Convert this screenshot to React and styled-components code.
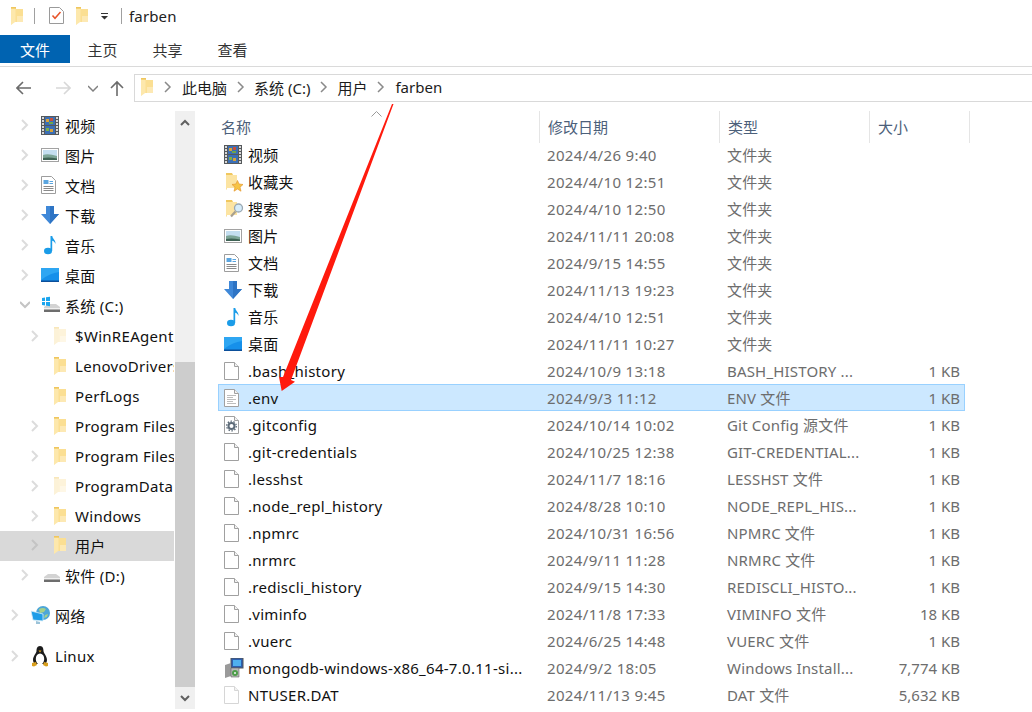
import React from "react";
import styled, { createGlobalStyle } from "styled-components";

const FONT = `"Noto Sans", "Noto Sans CJK SC", sans-serif`;

const Global = createGlobalStyle`
  html, body { margin: 0; padding: 0; background: #fff; overflow: hidden; }
  * { box-sizing: border-box; }
  body { font-family: ${FONT}; font-size: 15px; color: #111; }
`;

const Page = styled.div`
  position: relative;
  width: 1032px;
  height: 712px;
  overflow: hidden;
  background: #fff;
`;

const TitleBar = styled.div`
  height: 35px;
  display: flex;
  align-items: center;
  padding-left: 10px;
  padding-bottom: 4px;
`;
const TitleSep = styled.span`
  width: 1px;
  height: 16px;
  background: #a0a0a0;
  margin: 0 ${p => p.$right}px 0 ${p => p.$left}px;
`;
const TitleText = styled.span`
  font-size: 15px;
  color: #222;
  letter-spacing: 0.15px;
`;
const TitleIconGap = styled.span`
  display: inline-flex;
  margin-right: ${p => p.$m}px;
`;

const Ribbon = styled.div`
  height: 32px;
  display: flex;
  align-items: flex-start;
  border-bottom: 1px solid #dadada;
`;
const FileTab = styled.div`
  width: 70px;
  height: 28px;
  background: #0063b1;
  color: #fff;
  font-size: 15px;
  display: flex;
  align-items: center;
  justify-content: center;
`;
const RibbonTab = styled.div`
  width: 65px;
  height: 28px;
  font-size: 15px;
  color: #333;
  display: flex;
  align-items: center;
  justify-content: center;
`;

const NavRow = styled.div`
  height: 35px;
  display: flex;
  align-items: flex-end;
`;
const NavButtons = styled.div`
  width: 134px;
  height: 27px;
  display: flex;
  align-items: center;
`;
const NavSlot = styled.span`
  width: ${p => p.$w}px;
  flex: none;
  display: flex;
  justify-content: center;
`;
const AddressBox = styled.div`
  flex: 1;
  height: 28px;
  border: 1px solid #d9d9d9;
  border-right: 0;
  display: flex;
  align-items: center;
  padding: 0 0 2px 5px;
  font-size: 15px;
  color: #1c1c1c;
`;
const Crumb = styled.span`
  white-space: nowrap;
`;
const CrumbArrow = styled.span`
  display: inline-flex;
  width: ${p => p.$w}px;
  justify-content: center;
`;

const Body = styled.div`
  height: 610px;
  display: flex;
`;

const Sidebar = styled.aside`
  width: 174px;
  padding-top: 9px;
  flex: none;
  overflow: hidden;
`;
const TreeRow = styled.div`
  height: 30px;
  display: flex;
  align-items: center;
  white-space: nowrap;
  overflow: hidden;
  padding-left: ${p => p.$level * 10 + 20}px;
  padding-bottom: ${p => (p.$latin ? 0 : 2)}px;
  margin-top: ${p => p.$gap || 0}px;
  background: ${p => (p.$selected ? "#d9d9d9" : "transparent")};
  font-size: 15px;
  letter-spacing: 0.3px;
  color: #111;
`;
const Twisty = styled.span`
  width: 21px;
  flex: none;
  display: flex;
`;
const TreeIcon = styled.span`
  width: 24px;
  flex: none;
  display: flex;
  padding-left: ${p => (p.$inset ? 2 : 0)}px;
`;

const Scrollbar = styled.div`
  width: 20px;
  margin: 9px 0 3px 1px;
  background: #f0f0f0;
  display: flex;
  flex-direction: column;
  flex: none;
`;
const ScrollBtn = styled.div`
  height: 22px;
  flex: none;
  display: flex;
  align-items: center;
  justify-content: center;
`;
const ScrollTrack = styled.div`
  flex: 1;
  padding-top: 229px;
  display: flex;
`;
const ScrollThumb = styled.div`
  flex: 1;
  background: #cdcdcd;
`;

const Main = styled.main`
  flex: 1;
  padding: 9px 0 0 23px;
  position: relative;
`;
const HeaderRow = styled.div`
  display: grid;
  grid-template-columns: 322px 180px 150px 100px;
  height: 30px;
  color: #4c607a;
  font-size: 15px;
`;
const HeaderCell = styled.div`
  height: 32px;
  padding: 5px 0 0 ${p => (p.$first ? 3 : 8)}px;
  border-right: 1px solid #e5e5e5;
  position: relative;
`;
const SortCaret = styled.span`
  position: absolute;
  left: 153px;
  top: 0;
  display: flex;
`;
const FileRow = styled.div`
  display: grid;
  height: 27px;
  align-items: center;
  width: 747px;
  grid-template-columns: 321px 180px 150px 94px;
  border: 1px solid ${p => (p.$selected ? "#99d1ff" : "transparent")};
  background: ${p => (p.$selected ? "#cce8ff" : "transparent")};
`;
const NameCell = styled.div`
  display: flex;
  align-items: center;
  padding-left: 4px;
  color: #111;
  white-space: nowrap;
  overflow: hidden;
  letter-spacing: 0.28px;
`;
const FileIcon = styled.span`
  width: 25px;
  flex: none;
  display: flex;
  padding-left: 1px;
`;
const DateCell = styled.div`
  padding-left: 7px;
  color: #6d6d6d;
  white-space: nowrap;
  letter-spacing: 0.35px;
`;
const TypeCell = styled.div`
  padding-left: 7px;
  color: #6d6d6d;
  white-space: nowrap;
  letter-spacing: 0.18px;
`;
const Size = styled.div`
  text-align: right;
  padding-right: 4px;
  color: #6d6d6d;
  white-space: nowrap;
`;
const ArrowOverlay = styled.svg`
  position: absolute;
  left: 0;
  top: 0;
  pointer-events: none;
`;

/* ---------- icons ---------- */
const Folder = ({ pale }) => (
  <svg width="13" height="18" viewBox="0 0 13 18">
    <path d="M1 0h5v2h7v13H2L1 18z" fill={pale ? "#fbeecb" : "#f6d474"} />
    <path d="M5 2h8v13H5z" fill={pale ? "#fdf3da" : "#fbdf93"} />
    <path d="M7 9h6v6H7z" fill={pale ? "#fef7e6" : "#fde9b4"} />
    <path d="M1 1.500h4.500v13.300L1 18z" fill={pale ? "#fcf2d8" : "#fde8ac"} />
    <path d="M1 0h5v1.500H1z" fill={pale ? "#f8e7bb" : "#efc65f"} />
  </svg>
);
const BigFolder = ({ children }) => (
  <svg width="20" height="20" viewBox="0 0 20 20">
    <path d="M2 1h6l1 2v13H3l-1 2z" fill="#f0c75e" />
    <path d="M2 3h11v13H3l-1 2z" fill="#fce4a2" />
    {children}
  </svg>
);
const Star = () => (
  <BigFolder>
    <path d="M13.500 8.500l1.500 3.500 4 .5-3 2.700 1 4-3.500-2.200-3.500 2.200 1-4-3-2.700 4-.5z" fill="#f6c445" stroke="#e59a30" strokeWidth=".7" />
  </BigFolder>
);
const SearchF = () => (
  <BigFolder>
    <circle cx="14.500" cy="9" r="4" fill="#d5ecfa" stroke="#9aa8b2" strokeWidth="1.300" />
    <path d="M11.500 12.500l-4.500 5" stroke="#a8a090" strokeWidth="2.200" />
  </BigFolder>
);
const Video = () => (
  <svg width="18" height="19" viewBox="0 0 18 19">
    <rect x="0" y="0" width="18" height="19" fill="#55595c" />
    <rect x="4" y="1" width="10" height="8" fill="#3c6fb5" />
    <rect x="4" y="10" width="10" height="8" fill="#3c6fb5" />
    <rect x="5" y="3" width="3" height="3" fill="#d9a23a" />
    <rect x="9" y="2" width="3" height="3" fill="#c8503a" />
    <rect x="8" y="6" width="4" height="2" fill="#6ea84a" />
    <rect x="5" y="12" width="3" height="3" fill="#7cae4a" />
    <rect x="9" y="13" width="3" height="3" fill="#d9a23a" />
    {[1, 4, 7, 10, 13, 16].map(y => (
      <g key={y}>
        <rect x="1" y={y} width="2" height="2" fill="#d8d8d8" />
        <rect x="15" y={y} width="2" height="2" fill="#d8d8d8" />
      </g>
    ))}
  </svg>
);
const Picture = () => (
  <svg width="18" height="14" viewBox="0 0 18 14">
    <rect x=".5" y=".5" width="17" height="13" fill="#fff" stroke="#a2a2a2" />
    <rect x="2" y="2" width="14" height="6" fill="#c4def0" />
    <path d="M2 7q5-2 14 1v4H2z" fill="#7da597" />
    <path d="M2 10q6-1 14 .5V12H2z" fill="#3f6355" />
  </svg>
);
const Doc = () => (
  <svg width="15" height="18" viewBox="0 0 15 18">
    <path d="M.5.5h10l4 4v13H.5z" fill="#fff" stroke="#9d9d9d" />
    <rect x="2.500" y="4" width="5" height="4" fill="#5aa5e0" />
    {[5, 7].map(y => <rect key={y} x="8.500" y={y} width="3.500" height="1" fill="#5aa5e0" />)}
    {[10, 12, 14].map(y => <rect key={y} x="2.500" y={y} width="10" height="1" fill="#8a8a8a" />)}
  </svg>
);
const Download = () => (
  <svg width="18" height="18" viewBox="0 0 18 18">
    <path d="M5 0h8v8h5l-9 10L0 8h5z" fill="#3f88d8" />
    <path d="M9 0h4v8h5l-9 10z" fill="#2e74c4" />
  </svg>
);
const Music = () => (
  <svg width="18" height="20" viewBox="0 0 18 20">
    <ellipse cx="7" cy="16" rx="4" ry="3.200" fill="#1a9ce8" />
    <path d="M9.500 1h1.800c.2 3 3.700 4 3.200 8-.6-2-2-3-3.300-3.300V16H9.500z" fill="#1a9ce8" />
  </svg>
);
const Desktop = () => (
  <svg width="18" height="14" viewBox="0 0 18 14">
    <rect width="18" height="13" fill="#1690ea" />
    <path d="M0 0h18v4q-9 1-18 8z" fill="#2ea6f2" />
    <rect y="12.500" width="18" height="1.500" fill="#0b4f9a" />
  </svg>
);
const Drive = ({ win }) => (
  <svg width="20" height="18" viewBox="0 0 20 18">
    <path d="M3 11l4-3h8l4 3v3H3z" fill="#d3d3d3" />
    <path d="M3 13h16v3H3z" fill="#6d6d6d" />
    <path d="M3 12h16v1.500H3z" fill="#f0f0f0" />
    {win && (
      <g fill="#1ba5ee">
        <path d="M1 2l3-.5V5H1zM5 1.300L9 .8V5H5zM1 6h3v3.500L1 9zM5 6h4v4.200l-4-.6z" />
      </g>
    )}
  </svg>
);
const Globe = () => (
  <svg width="20" height="19" viewBox="0 0 20 19">
    <circle cx="12" cy="7" r="7" fill="#4da6d8" />
    <path d="M8 3q4-2 7 0l-2 3-4 1zM14 9l3-1-1 3-3 1z" fill="#a5d08a" />
    <path d="M0 5l12 3v7L2 14z" fill="#1e9de8" stroke="#d8eef8" strokeWidth=".8" />
    <path d="M5 15l4 1v2H5z" fill="#9cc3d8" />
  </svg>
);
const Tux = () => (
  <svg width="18" height="21" viewBox="0 0 18 21">
    <path d="M9 0c3 0 3.500 3 3.500 5 0 2 3.500 5 3.500 9 0 2-1 3-2 4H4c-1-1-2-2-2-4 0-4 3.500-7 3.500-9C5.500 3 6 0 9 0z" fill="#1c1c1c" />
    <ellipse cx="9" cy="13" rx="4.200" ry="5.500" fill="#fff" />
    <path d="M7.500 4.500h3L9 6.500z" fill="#e3a51e" />
    <path d="M1 17l4-1 1 3-3 1.500-2-.5zM17 17l-4-1-1 3 3 1.500 2-.5z" fill="#d99f1d" />
  </svg>
);
const Blank = ({ lines, gear, pale }) => (
  <svg width="15" height="18" viewBox="0 0 15 18">
    <path d="M.5.5h10l4 4v13H.5z" fill="#fff" stroke={pale ? "#d6d6d6" : "#a0a0a0"} />
    <path d="M10.500.5v4h4" fill="#f2f2f2" stroke={pale ? "#d6d6d6" : "#a0a0a0"} />
    {lines && [6, 8, 10, 12, 14].map((y, i) => (
      <rect key={y} x="3" y={y} width={i % 2 ? 6 : 9} height="1" fill="#bdbdbd" />
    ))}
    {gear && (
      <g>
        <circle cx="7.500" cy="10" r="3" fill="none" stroke="#5d6b78" strokeWidth="2" />
        <circle cx="7.500" cy="10" r="4.800" fill="none" stroke="#5d6b78" strokeWidth="1.300" strokeDasharray="1.500 1.500" />
      </g>
    )}
  </svg>
);
const Installer = () => (
  <svg width="20" height="20" viewBox="0 0 20 20">
    <rect x="7" y="0" width="12" height="10" fill="#2d5fb0" stroke="#555" />
    <rect x="9" y="2" width="8" height="6" fill="#4fb0ee" />
    <path d="M1 7l6-2v13l-6 2z" fill="#9a9a9a" />
    <path d="M7 10h8v9H7z" fill="#b8b8b8" stroke="#666" strokeWidth=".6" />
    <circle cx="11" cy="15" r="3" fill="#4d9e4a" />
    <circle cx="11" cy="15" r="1" fill="#f0f0f0" />
  </svg>
);
const CheckPage = () => (
  <svg width="15" height="17" viewBox="0 0 15 17">
    <path d="M.5.5h10l4 4v12H.5z" fill="#fff" stroke="#9a9a9a" />
    <path d="M3.500 8.500l2.500 2.800L11.500 5" fill="none" stroke="#e8542a" strokeWidth="1.500" />
  </svg>
);
const Chevron = ({ c = "#dcdcdc", w = 2, down }) => (
  <svg width="10" height="12" viewBox="0 0 10 12">
    <path d={down ? "M0 3l5 5 5-5" : "M2 1l5 5-5 5"} fill="none" stroke={c} strokeWidth={w} />
  </svg>
);
const NavArrow = ({ c, dir }) => {
  const paths = {
    left: "M15 8H1M7 2L1 8l6 6",
    right: "M1 8h14M9 2l6 6-6 6",
    up: "M8 16V2M2 8l6-6 6 6",
  };
  return (
    <svg width="16" height="17" viewBox="0 0 16 17">
      <path d={paths[dir]} fill="none" stroke={c} strokeWidth="1.600" />
    </svg>
  );
};

/* ---------- data ---------- */
const tree = [
  { level: 0, icon: <Video />, label: "视频", tw: "r" },
  { level: 0, icon: <Picture />, label: "图片", tw: "r" },
  { level: 0, icon: <Doc />, label: "文档", tw: "r" },
  { level: 0, icon: <Download />, label: "下载", tw: "r" },
  { level: 0, icon: <Music />, label: "音乐", tw: "r" },
  { level: 0, icon: <Desktop />, label: "桌面", tw: "r" },
  { level: 0, icon: <Drive win />, label: "系统 (C:)", tw: "d" },
  { level: 1, icon: <Folder pale />, label: "$WinREAgent", tw: "r", latin: true },
  { level: 1, icon: <Folder />, label: "LenovoDrivers", latin: true },
  { level: 1, icon: <Folder />, label: "PerfLogs", latin: true },
  { level: 1, icon: <Folder />, label: "Program Files", tw: "r", latin: true },
  { level: 1, icon: <Folder />, label: "Program Files (x86)", tw: "r", latin: true },
  { level: 1, icon: <Folder pale />, label: "ProgramData", tw: "r", latin: true },
  { level: 1, icon: <Folder />, label: "Windows", tw: "r", latin: true },
  { level: 1, icon: <Folder />, label: "用户", tw: "r", selected: true },
  { level: 0, icon: <Drive />, label: "软件 (D:)", tw: "r" },
  { level: -1, icon: <Globe />, label: "网络", tw: "r", gap: 10 },
  { level: -1, icon: <Tux />, label: "Linux", tw: "r", gap: 10, latin: true },
];

const folder = "文件夹";
const files = [
  [<Video />, "视频", "2024/4/26 9:40", folder, ""],
  [<Star />, "收藏夹", "2024/4/10 12:51", folder, ""],
  [<SearchF />, "搜索", "2024/4/10 12:50", folder, ""],
  [<Picture />, "图片", "2024/11/11 20:08", folder, ""],
  [<Doc />, "文档", "2024/9/15 14:55", folder, ""],
  [<Download />, "下载", "2024/11/13 19:23", folder, ""],
  [<Music />, "音乐", "2024/4/10 12:51", folder, ""],
  [<Desktop />, "桌面", "2024/11/11 10:27", folder, ""],
  [<Blank />, ".bash_history", "2024/10/9 13:18", "BASH_HISTORY ...", "1 KB"],
  [<Blank lines />, ".env", "2024/9/3 11:12", "ENV 文件", "1 KB", true],
  [<Blank gear />, ".gitconfig", "2024/10/14 10:02", "Git Config 源文件", "1 KB"],
  [<Blank />, ".git-credentials", "2024/10/25 12:38", "GIT-CREDENTIAL...", "1 KB"],
  [<Blank />, ".lesshst", "2024/11/7 18:16", "LESSHST 文件", "1 KB"],
  [<Blank />, ".node_repl_history", "2024/8/28 10:10", "NODE_REPL_HIS...", "1 KB"],
  [<Blank />, ".npmrc", "2024/10/31 16:56", "NPMRC 文件", "1 KB"],
  [<Blank />, ".nrmrc", "2024/9/11 11:28", "NRMRC 文件", "1 KB"],
  [<Blank />, ".rediscli_history", "2024/9/15 14:30", "REDISCLI_HISTO...", "1 KB"],
  [<Blank />, ".viminfo", "2024/11/8 17:33", "VIMINFO 文件", "18 KB"],
  [<Blank />, ".vuerc", "2024/6/25 14:48", "VUERC 文件", "1 KB"],
  [<Installer />, "mongodb-windows-x86_64-7.0.11-si...", "2024/9/2 18:05", "Windows Install...", "7,774 KB"],
  [<Blank pale />, "NTUSER.DAT", "2024/11/13 9:45", "DAT 文件", "5,632 KB"],
];

const crumbs = [
  ["此电脑", 29],
  ["系统 (C:)", 27],
  ["用户", 27],
  ["farben", 28],
];

export default function App() {
  return (
    <Page>
      <Global />
      <TitleBar>
        <Folder />
        <TitleSep $left={11} $right={14} />
        <TitleIconGap $m={11}><CheckPage /></TitleIconGap>
        <TitleIconGap $m={12}><Folder /></TitleIconGap>
        <svg width="9" height="8" viewBox="0 0 9 8"><path d="M1 1h7v1H1zM1 4h7L4.500 7.500z" fill="#333" /></svg>
        <TitleSep $left={12} $right={7} />
        <TitleText>farben</TitleText>
      </TitleBar>
      <Ribbon>
        <FileTab>文件</FileTab>
        <RibbonTab>主页</RibbonTab>
        <RibbonTab>共享</RibbonTab>
        <RibbonTab>查看</RibbonTab>
      </Ribbon>
      <NavRow>
        <NavButtons>
          <NavSlot $w={8} />
          <NavSlot $w={32}><NavArrow c="#6b6b6b" dir="left" /></NavSlot>
          <NavSlot $w={45}><NavArrow c="#d8d8d8" dir="right" /></NavSlot>
          <NavSlot $w={15}><Chevron c="#808080" w={1.500} down /></NavSlot>
          <NavSlot $w={34}><NavArrow c="#6b6b6b" dir="up" /></NavSlot>
        </NavButtons>
        <AddressBox>
          <Folder />
          {crumbs.map(([label, w]) => (
            <React.Fragment key={label}>
              <CrumbArrow $w={w}><Chevron c="#8a8a8a" w={1.500} /></CrumbArrow>
              <Crumb>{label}</Crumb>
            </React.Fragment>
          ))}
        </AddressBox>
      </NavRow>
      <Body>
        <Sidebar>
          {tree.map(n => (
            <TreeRow key={n.label} $level={n.level} $selected={n.selected} $gap={n.gap} $latin={n.latin}>
              <Twisty>
                {n.tw === "r" && <Chevron c={n.selected ? "#c4c4c4" : "#dcdcdc"} />}
                {n.tw === "d" && <Chevron down c="#c4c4c4" />}
              </Twisty>
              <TreeIcon $inset={n.level === 1}>{n.icon}</TreeIcon>
              {n.label}
            </TreeRow>
          ))}
        </Sidebar>
        <Scrollbar>
          <ScrollBtn>
            <svg width="10" height="7" viewBox="0 0 10 7"><path d="M1 6l4-4 4 4" fill="none" stroke="#606060" strokeWidth="2" /></svg>
          </ScrollBtn>
          <ScrollTrack><ScrollThumb /></ScrollTrack>
          <ScrollBtn>
            <svg width="10" height="7" viewBox="0 0 10 7"><path d="M1 1l4 4 4-4" fill="none" stroke="#606060" strokeWidth="2" /></svg>
          </ScrollBtn>
        </Scrollbar>
        <Main>
          <HeaderRow>
            <HeaderCell $first>
              名称
              <SortCaret>
                <svg width="11" height="6" viewBox="0 0 11 6"><path d="M.5 5.500l5-5 5 5" fill="none" stroke="#9a9a9a" /></svg>
              </SortCaret>
            </HeaderCell>
            <HeaderCell>修改日期</HeaderCell>
            <HeaderCell>类型</HeaderCell>
            <HeaderCell>大小</HeaderCell>
          </HeaderRow>
          {files.map(([icon, name, date, type, size, selected]) => (
            <FileRow key={name} $selected={selected}>
              <NameCell>
                <FileIcon>{icon}</FileIcon>
                {name}
              </NameCell>
              <DateCell>{date}</DateCell>
              <TypeCell>{type}</TypeCell>
              <Size>{size}</Size>
            </FileRow>
          ))}
        </Main>
      </Body>
      <ArrowOverlay width="1032" height="712" viewBox="0 0 1032 712">
        <path d="M392 104L283 377H279L281.700 391L295 381.700L291 380L393.500 104z" fill="#ff1a0d" />
      </ArrowOverlay>
    </Page>
  );
}
